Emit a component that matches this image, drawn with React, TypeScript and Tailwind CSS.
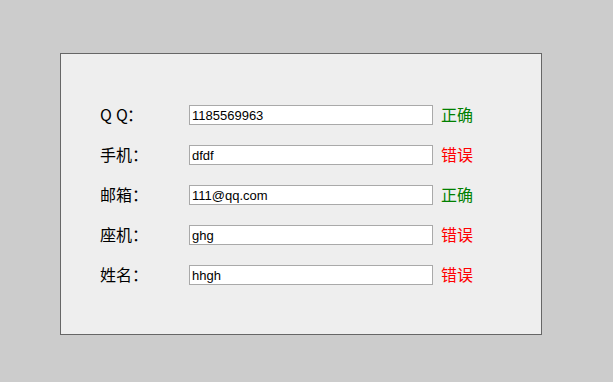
import React from "react";

type Row = { label: React.ReactNode; key: string; value: string; ok: boolean };

const rows: Row[] = [
  {
    key: "qq",
    label: (
      <>
        <span className="inline-block w-[16px]">Q</span>
        <span className="inline-block w-[11px]">Q</span>：
      </>
    ),
    value: "1185569963",
    ok: true,
  },
  { key: "phone", label: "手机：", value: "dfdf", ok: false },
  { key: "mail", label: "邮箱：", value: "111@qq.com", ok: true },
  { key: "tel", label: "座机：", value: "ghg", ok: false },
  { key: "name", label: "姓名：", value: "hhgh", ok: false },
];

export default function App() {
  return (
    <div className="w-[613px] h-[382px] bg-[#cccccc] pt-[53px] pl-[60px]">
      <div className="w-[482px] h-[282px] border border-[#666666] bg-[#eeeeee] pt-[51px] pl-[39px] flex flex-col gap-[20px]">
        {rows.map((r) => (
          <div key={r.key} className="flex items-center h-[20px]">
            <div
              className="w-[89px] mb-[3px] whitespace-nowrap text-[16px] leading-[20px] text-black"
              style={{ fontFamily: '"Noto Sans CJK SC", "Liberation Sans", sans-serif' }}
            >
              {r.label}
            </div>
            <input
              readOnly
              value={r.value}
              className="w-[244px] h-[20px] border border-[#a9a9a9] bg-white px-[2px] text-[13px] text-black outline-none"
              style={{ fontFamily: '"Liberation Sans", Arial, sans-serif' }}
            />
            <div
              className={
                "ml-[8px] mb-[3px] text-[16px] leading-[20px] " +
                (r.ok ? "text-[#008000]" : "text-[#ff0000]")
              }
              style={{ fontFamily: '"Noto Sans CJK SC", sans-serif' }}
            >
              {r.ok ? "正确" : "错误"}
            </div>
          </div>
        ))}
      </div>
    </div>
  );
}
